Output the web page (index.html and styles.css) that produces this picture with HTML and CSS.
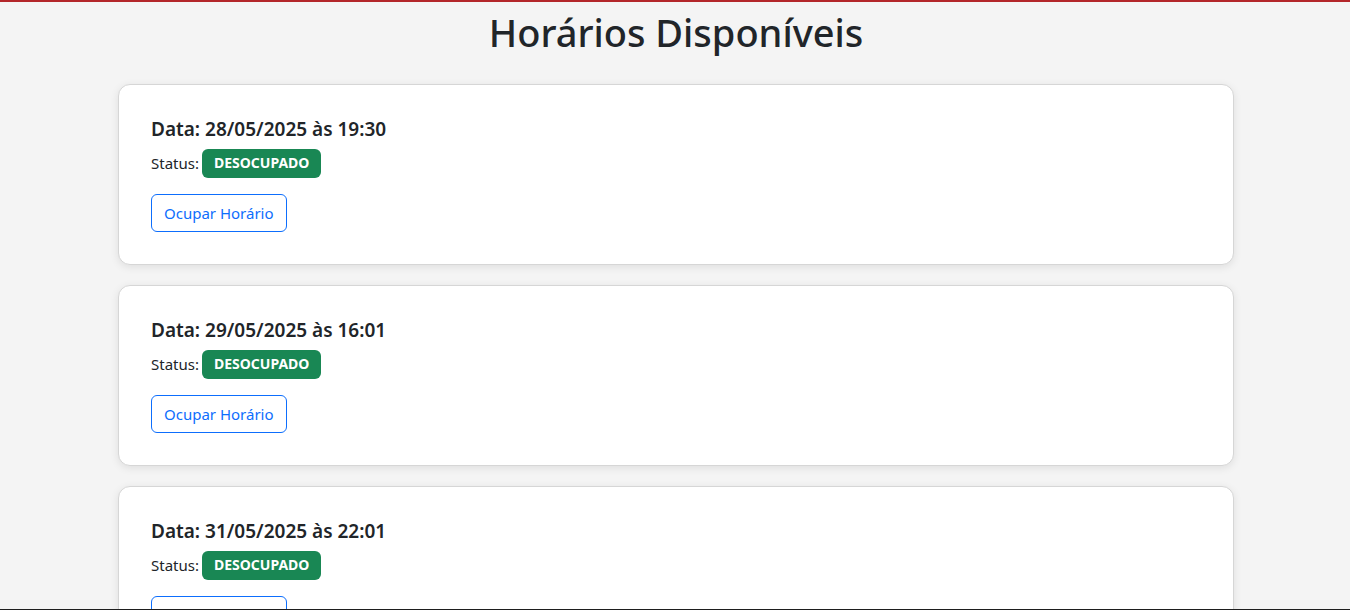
FILE: index.html
```html
<!DOCTYPE html>
<html lang="pt-BR">
<head>
<meta charset="utf-8">
<title>Horários Disponíveis</title>
<link rel="stylesheet" href="styles.css">
</head>
<body>
<div class="topbar"></div>
<main class="container">
  <h1 class="page-title">Horários Disponíveis</h1>
  <div class="slot-list">
    <section class="slot-card">
      <h5 class="slot-date">Data: 28/05/2025 às 19:30</h5>
      <p class="slot-status">Status: <span class="badge">DESOCUPADO</span></p>
      <button class="btn-outline" type="button">Ocupar Horário</button>
    </section>
    <section class="slot-card">
      <h5 class="slot-date">Data: 29/05/2025 às 16:01</h5>
      <p class="slot-status">Status: <span class="badge">DESOCUPADO</span></p>
      <button class="btn-outline" type="button">Ocupar Horário</button>
    </section>
    <section class="slot-card">
      <h5 class="slot-date">Data: 31/05/2025 às 22:01</h5>
      <p class="slot-status">Status: <span class="badge">DESOCUPADO</span></p>
      <button class="btn-outline" type="button">Ocupar Horário</button>
    </section>
  </div>
</main>
<div class="bottom-edge"></div>
</body>
</html>
```

FILE: styles.css
```css
* { box-sizing: border-box; }
html, body { margin: 0; padding: 0; }
body {
  background: #f4f4f4;
  color: #212529;
  font-family: "Noto Sans", "Open Sans", Arial, sans-serif;
  font-size: 16px;
  line-height: 1.5;
}
.topbar {
  height: 2px;
  background: #b3262a;
}
.container {
  width: 1116px;
  margin-left: calc(50% - 557px);
}
.page-title {
  margin: 8px 0 28px;
  text-align: center;
  font-size: 38px;
  font-weight: 500;
  line-height: 1.2;
}
.slot-list {
  display: flex;
  flex-direction: column;
  gap: 20px;
}
.slot-card {
  background: #fff;
  border: 1px solid #d6d6d6;
  border-radius: 12px;
  box-shadow: 0 2px 8px rgba(0,0,0,0.09);
  padding: 32px;
  height: 181px;
}
.slot-date {
  margin: 0 0 8px;
  font-size: 19px;
  font-weight: 600;
  line-height: 24px;
}
.slot-status {
  margin: 0 0 16px;
  display: flex;
  align-items: center;
  gap: 3px;
  font-size: 15px;
  height: 29px;
}
.badge {
  display: inline-flex;
  align-items: center;
  height: 29px;
  padding: 0 12px;
  background: #198754;
  color: #fff;
  border-radius: 6px;
  font-size: 14px;
  font-weight: 700;
  line-height: 1;
}
.btn-outline {
  height: 38px;
  padding: 0 12px;
  background: #fff;
  color: #0d6efd;
  border: 1px solid #0d6efd;
  border-radius: 6px;
  font-family: inherit;
  font-size: 15px;
  cursor: pointer;
}
.bottom-edge {
  position: fixed;
  left: 0;
  right: 0;
  bottom: 0;
  height: 1px;
  background: #1e1e1e;
}
```
